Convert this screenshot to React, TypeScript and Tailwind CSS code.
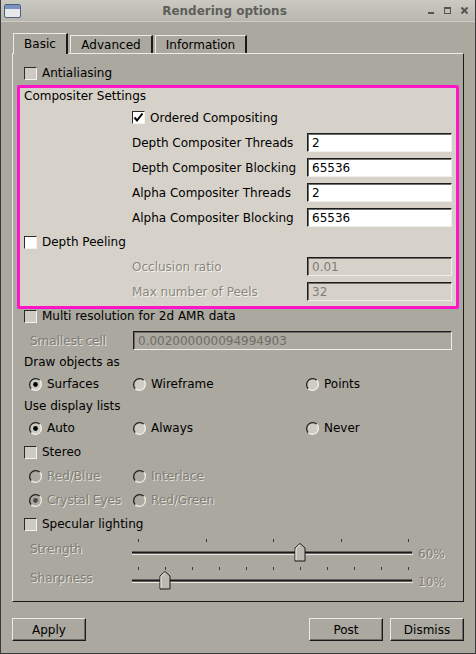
import React from 'react';

const dis = 'text-[#7f7d77] [text-shadow:1px_1px_0_#e4e2dc]';

function CheckBox({ checked = false, white = false }: { checked?: boolean; white?: boolean }) {
  return (
    <span
      className={`flex h-[13px] w-[13px] shrink-0 items-center justify-center border border-t-[#2b2b2b] border-l-[#2b2b2b] border-r-[#f4f2ec] border-b-[#f4f2ec] ${
        white ? 'bg-white' : 'bg-[#cdcac3]'
      }`}
    >
      {checked && (
        <svg width="11" height="11" viewBox="0 0 11 11">
          <path d="M1.5 5.5 L4 8.5 L9.5 1.5" stroke="#000" strokeWidth="2" fill="none" />
        </svg>
      )}
    </span>
  );
}

function Radio({ on = false, disabled = false }: { on?: boolean; disabled?: boolean }) {
  return (
    <svg width="13" height="13" viewBox="0 0 13 13" className="shrink-0">
      <circle cx="6.5" cy="6.5" r="6" fill={disabled ? '#aba89f' : '#cfccc5'} />
      <path d="M2.26 10.74 A6 6 0 0 1 10.74 2.26" stroke="#1e1e1e" fill="none" strokeWidth="1.3" />
      <path d="M10.74 2.26 A6 6 0 0 1 2.26 10.74" stroke="#f2f0ea" fill="none" strokeWidth="1.3" />
      {on && <circle cx="6.5" cy="6.5" r="2.4" fill={disabled ? '#4a4a4a' : '#000'} />}
    </svg>
  );
}

function Field({ value, disabled = false, light = false, wide = false }: { value: string; disabled?: boolean; light?: boolean; wide?: boolean }) {
  return (
    <div
      className={`flex h-[19px] shrink-0 items-center border border-t-[#1c1c1c] border-l-[#1c1c1c] border-r-[#f0eee8] border-b-[#f0eee8] pl-[4px] shadow-[inset_1px_1px_0_#6e6c68] ${
        wide ? 'w-[319px]' : 'w-[145px]'
      } ${disabled ? (light ? 'bg-[#d6d2ca] text-[#7f7d77]' : 'bg-[#aba89f] text-[#6f6d68]') : 'bg-white text-black'}`}
    >
      {value}
    </div>
  );
}

function Slider({ ticks, value }: { ticks: number; value: number }) {
  const x0 = 6;
  const x1 = 276;
  const hx = x0 + ((x1 - x0) * value) / 100;
  const marks = Array.from({ length: ticks }, (_, i) => x0 + ((x1 - x0) * i) / (ticks - 1));
  return (
    <svg width="281" height="28" viewBox="0 0 281 28" className="shrink-0">
      {marks.map((m) => (
        <line key={m} x1={Math.round(m) + 0.5} x2={Math.round(m) + 0.5} y1="3" y2="6" stroke="#3a3a3a" />
      ))}
      <line x1="0" x2="281" y1="18.5" y2="18.5" stroke="#e8e6e0" />
      <line x1="0" x2="280" y1="16.5" y2="16.5" stroke="#1a1a1a" strokeWidth="2" />
      <polygon
        points={`${hx - 5},25 ${hx - 5},12 ${hx},7.5 ${hx + 5},12 ${hx + 5},25`}
        fill="#bcb9b1"
        stroke="#1a1a1a"
      />
      <polyline points={`${hx - 4},24 ${hx - 4},12.4 ${hx},8.8`} fill="none" stroke="#f2f0ea" />
    </svg>
  );
}

function RadioItem({ label, on = false, disabled = false, w }: { label: string; on?: boolean; disabled?: boolean; w: string }) {
  return (
    <div className={`flex items-center ${w}`}>
      <Radio on={on} disabled={disabled} />
      <span className={`ml-[5px] ${disabled ? dis : ''}`}>{label}</span>
    </div>
  );
}

function Button({ label }: { label: string }) {
  return (
    <div className="flex h-[23px] w-[74px] items-center justify-center border border-t-[#eceae4] border-l-[#eceae4] border-r-[#1a1a1a] border-b-[#1a1a1a] shadow-[inset_-1px_-1px_0_#6e6c68]">
      {label}
    </div>
  );
}

export default function App() {
  return (
    <div className="flex h-[654px] w-[476px] flex-col border-x border-b border-[#3a3a3a] bg-[#aba89f] font-['DejaVu_Sans',sans-serif] text-[12px] text-black">
      {/* title bar */}
      <div className="flex h-[22px] shrink-0 items-center border-b border-[#cfcec6] bg-gradient-to-b from-[#cacac2] to-[#b8b7af] px-[3px]">
        <div className="flex h-[14px] w-[17px] flex-col overflow-hidden rounded-[2px] border border-[#4f5f78] bg-[#e6e8ec]">
          <div className="h-[4px] bg-[#7b93c0]" />
        </div>
        <div className="flex-1 text-center font-bold text-[#5e5e5a]">Rendering options</div>
        <div className="flex items-center gap-[10px] pr-[4px]">
          <div className="mt-[4px] h-[2px] w-[6px] bg-[#55554f]" />
          <div className="h-[7px] w-[7px] border border-t-2 border-[#55554f]" />
          <svg width="7" height="7" viewBox="0 0 7 7">
            <path d="M0.5 0.5 L6.5 6.5 M6.5 0.5 L0.5 6.5" stroke="#55554f" strokeWidth="2" />
          </svg>
        </div>
      </div>

      {/* tabs */}
      <div className="ml-[11px] mt-[10px] flex h-[21px] w-[452px] items-end pl-[1px]">
        <div className="relative z-10 -mb-px flex h-[21px] w-[55px] items-center justify-center border-l border-t border-r-2 border-l-[#eceae4] border-t-[#eceae4] border-r-[#1a1a1a] bg-[#aba89f] pb-[1px]">
          Basic
        </div>
        <div className="ml-[2px] flex h-[18px] w-[83px] items-center justify-center border-l border-t border-r-2 border-l-[#eceae4] border-t-[#eceae4] border-r-[#1a1a1a]">
          Advanced
        </div>
        <div className="ml-[2px] flex h-[18px] w-[92px] items-center justify-center border-l border-t border-r-2 border-l-[#eceae4] border-t-[#eceae4] border-r-[#1a1a1a]">
          Information
        </div>
      </div>

      {/* panel */}
      <div className="ml-[11px] flex w-[452px] flex-col border border-t-[#eceae4] border-l-[#eceae4] border-r-[#1a1a1a] border-b-[#1a1a1a] pb-[9px] pt-[7px]">
        <div className="flex h-[24px] items-center pl-[11px]">
          <CheckBox />
          <span className="ml-[5px]">Antialiasing</span>
        </div>

        <div className="mx-[4px] flex flex-col rounded-[2px] border-[3px] border-[#ff14c8] bg-[#d6d2ca] pb-[2px]">
          <div className="flex h-[15px] items-center pl-[4px]">Compositer Settings</div>
          <div className="mt-[2px] flex h-[25px] items-center pl-[112px]">
            <CheckBox checked white />
            <span className="ml-[5px]">Ordered Compositing</span>
          </div>
          {[
            ['Depth Compositer Threads', '2'],
            ['Depth Compositer Blocking', '65536'],
            ['Alpha Compositer Threads', '2'],
            ['Alpha Compositer Blocking', '65536'],
          ].map(([label, value]) => (
            <div key={label} className="flex h-[25px] items-center pl-[112px]">
              <span className="w-[175px]">{label}</span>
              <Field value={value} />
            </div>
          ))}
          <div className="flex h-[24px] items-center pl-[4px]">
            <CheckBox white />
            <span className="ml-[5px]">Depth Peeling</span>
          </div>
          {[
            ['Occlusion ratio', '0.01'],
            ['Max number of Peels', '32'],
          ].map(([label, value]) => (
            <div key={label} className="flex h-[25px] items-center pl-[112px]">
              <span className="w-[175px] text-[#8a8781] [text-shadow:1px_1px_0_#f6f4ee]">{label}</span>
              <Field value={value} disabled light />
            </div>
          ))}
        </div>

        <div className="flex h-[14px] items-center pl-[11px]">
          <CheckBox />
          <span className="ml-[5px]">Multi resolution for 2d AMR data</span>
        </div>
        <div className="flex h-[29px] items-center pl-[17px] pt-[6px]">
          <span className={`w-[103px] ${dis}`}>Smallest cell</span>
          <Field value="0.002000000094994903" disabled wide />
        </div>

        <div className="flex h-[20px] items-center pl-[11px]">Draw objects as</div>
        <div className="flex h-[24px] items-center pl-[16px]">
          <RadioItem label="Surfaces" on w="w-[104px]" />
          <RadioItem label="Wireframe" w="w-[173px]" />
          <RadioItem label="Points" w="w-[100px]" />
        </div>
        <div className="flex h-[20px] items-center pl-[11px]">Use display lists</div>
        <div className="flex h-[24px] items-center pl-[16px]">
          <RadioItem label="Auto" on w="w-[104px]" />
          <RadioItem label="Always" w="w-[173px]" />
          <RadioItem label="Never" w="w-[100px]" />
        </div>

        <div className="flex h-[24px] items-center pl-[11px]">
          <CheckBox />
          <span className="ml-[5px]">Stereo</span>
        </div>
        <div className="flex h-[24px] items-center pl-[16px]">
          <RadioItem label="Red/Blue" disabled w="w-[104px]" />
          <RadioItem label="Interlace" disabled w="w-[173px]" />
        </div>
        <div className="flex h-[24px] items-center pl-[16px]">
          <RadioItem label="Crystal Eyes" on disabled w="w-[104px]" />
          <RadioItem label="Red/Green" disabled w="w-[173px]" />
        </div>
        <div className="flex h-[24px] items-center pl-[11px]">
          <CheckBox />
          <span className="ml-[5px]">Specular lighting</span>
        </div>

        <div className="flex h-[28px] items-start pl-[17px]">
          <span className={`w-[102px] pt-[5px] leading-[16px] ${dis}`}>Strength</span>
          <Slider ticks={5} value={60} />
          <span className={`ml-[5px] pt-[10px] leading-[16px] ${dis}`}>60%</span>
        </div>
        <div className="flex h-[28px] items-start pl-[17px]">
          <span className={`w-[102px] pt-[6px] leading-[16px] ${dis}`}>Sharpness</span>
          <Slider ticks={11} value={10} />
          <span className={`ml-[5px] pt-[10px] leading-[16px] ${dis}`}>10%</span>
        </div>
      </div>

      {/* buttons */}
      <div className="ml-[11px] mt-[16px] flex w-[452px] items-center justify-between">
        <Button label="Apply" />
        <div className="flex gap-[7px]">
          <Button label="Post" />
          <Button label="Dismiss" />
        </div>
      </div>
    </div>
  );
}
